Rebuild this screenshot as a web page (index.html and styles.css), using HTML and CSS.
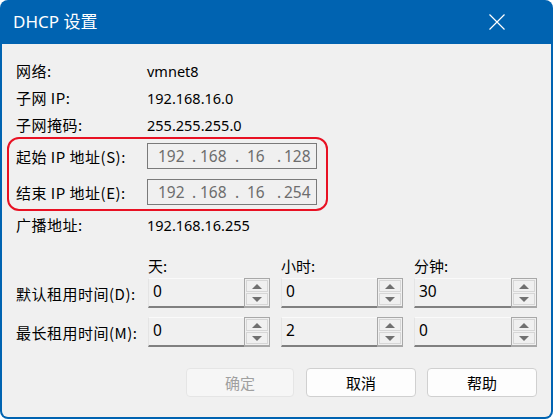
FILE: index.html
```html
<!DOCTYPE html>
<html lang="zh-CN">
<head>
<meta charset="utf-8">
<title>DHCP 设置</title>
<link rel="stylesheet" href="styles.css">
</head>
<body>
<div class="window">
  <div class="titlebar">
    <span class="title">DHCP 设置</span>
    <svg class="close" width="16" height="16" viewBox="0 0 16 16"><path d="M0.5 0.5 L15.5 15.5 M15.5 0.5 L0.5 15.5" stroke="#fff" stroke-width="1.2" fill="none"/></svg>
  </div>
  <div class="content">
    <div class="info">
      <div class="row"><span class="lbl">网络:</span><span class="val">vmnet8</span></div>
      <div class="row"><span class="lbl">子网 IP:</span><span class="val">192.168.16.0</span></div>
      <div class="row"><span class="lbl">子网掩码:</span><span class="val">255.255.255.0</span></div>
    </div>
    <div class="highlight">
      <div class="iprow">
        <span class="lbl">起始 IP 地址(S):</span>
        <div class="ip"><span class="o1">192</span><span class="d1">.</span><span class="o2">168</span><span class="d2">.</span><span class="o3">16</span><span class="d3">.</span><span>128</span></div>
      </div>
      <div class="iprow">
        <span class="lbl">结束 IP 地址(E):</span>
        <div class="ip"><span class="o1">192</span><span class="d1">.</span><span class="o2">168</span><span class="d2">.</span><span class="o3">16</span><span class="d3">.</span><span>254</span></div>
      </div>
    </div>
    <div class="row"><span class="lbl">广播地址:</span><span class="val">192.168.16.255</span></div>
    <div class="lease">
      <div class="lrow head"><span></span><span>天:</span><span>小时:</span><span>分钟:</span></div>
      <div class="lrow">
        <span class="lbl">默认租用时间(D):</span>
        <div class="spin"><div class="field">0</div><div class="btns"><div class="b"><i class="up"></i></div><div class="b"><i class="dn"></i></div></div></div>
        <div class="spin"><div class="field">0</div><div class="btns"><div class="b"><i class="up"></i></div><div class="b"><i class="dn"></i></div></div></div>
        <div class="spin"><div class="field">30</div><div class="btns"><div class="b"><i class="up"></i></div><div class="b"><i class="dn"></i></div></div></div>
      </div>
      <div class="lrow">
        <span class="lbl">最长租用时间(M):</span>
        <div class="spin"><div class="field">0</div><div class="btns"><div class="b"><i class="up"></i></div><div class="b"><i class="dn"></i></div></div></div>
        <div class="spin"><div class="field">2</div><div class="btns"><div class="b"><i class="up"></i></div><div class="b"><i class="dn"></i></div></div></div>
        <div class="spin"><div class="field">0</div><div class="btns"><div class="b"><i class="up"></i></div><div class="b"><i class="dn"></i></div></div></div>
      </div>
    </div>
    <div class="buttons">
      <button class="btn disabled w108">确定</button>
      <button class="btn">取消</button>
      <button class="btn">帮助</button>
    </div>
  </div>
</div>
</body>
</html>
```

FILE: styles.css
```css
* { box-sizing: border-box; }
html, body { margin: 0; padding: 0; background: #ffffff; }
body {
  font-family: "Noto Sans", "Noto Sans CJK SC", sans-serif;
  font-size: 15px;
  color: #000;
}
.window {
  width: 553px;
  height: 419px;
  background: #0063b1;
  border-radius: 8px;
  display: flex;
  flex-direction: column;
  overflow: hidden;
}
.titlebar {
  height: 44px;
  display: flex;
  align-items: center;
  justify-content: space-between;
  padding: 0 48px 0 13px;
  color: #fff;
}
.title { font-size: 17px; line-height: 20px; margin-top: -1px; }
.close { display: block; margin-top: -1px; }
.content {
  flex: 1;
  margin: 0 2px 2px 2px;
  background: #f0f0f0;
  border-radius: 0 0 6px 6px;
  padding: 13px 14px 0 14px;
}
.row {
  height: 27px;
  display: grid;
  grid-template-columns: 131px auto;
  align-items: center;
}
.lbl { font-family: "Noto Sans CJK SC", sans-serif; font-size: 15px; letter-spacing: 0.5px; white-space: nowrap; }
.val { font-size: 14.5px; }
.highlight {
  margin: -1px 0 0 -9px;
  width: 321px;
  border: 2px solid #e81123;
  border-radius: 12px;
  padding: 4px 9px 4px 7px;
  display: flex;
  flex-direction: column;
  gap: 10px;
}
.iprow {
  height: 26px;
  display: grid;
  grid-template-columns: 131px 170px;
  align-items: center;
}
.ip {
  height: 26px;
  border: 1px solid #7a7a7a;
  background: #f0f0f0;
  color: #6d6d6d;
  font-size: 15.5px;
  display: grid;
  grid-template-columns: 34px 8px 35px 12px 30px 7px auto;
  align-items: center;
  padding-left: 10px;
  line-height: 24px;
}
.lease { margin-top: 18px; display: flex; flex-direction: column; gap: 9px; }
.lrow {
  display: grid;
  grid-template-columns: 121px 122px 122px 123px;
  column-gap: 11px;
  height: 30px;
  align-items: center;
}
.lrow.head {
  height: 17px;
  align-items: start;
  font-family: "Noto Sans CJK SC", sans-serif;
  font-size: 15px;
  line-height: 22px;
  margin-bottom: -4px;
}
.lrow.head span { margin-top: -1px; }
.spin { display: flex; height: 30px; }
.field {
  flex: 1;
  border-top: 1px solid #fafafa;
  border-left: 1px solid #e4e4e4;
  border-bottom: 2px solid #808080;
  padding-left: 4px;
  line-height: 24px;
  font-size: 15.5px;
}
.btns {
  width: 26px;
  border: 1px solid #a8a8a8;
  border-bottom-width: 2px;
  display: flex;
  flex-direction: column;
  padding: 1px;
  gap: 1px;
}
.b {
  flex: 1;
  border: 1px solid #d6d6d6;
  display: flex;
  align-items: center;
  justify-content: center;
}
.b i { display: block; width: 0; height: 0; border-left: 5px solid transparent; border-right: 5px solid transparent; }
.b i.up { border-bottom: 5px solid #707070; }
.b i.dn { border-top: 5px solid #707070; }
.buttons {
  margin-top: 21px;
  display: flex;
  justify-content: flex-end;
  gap: 11px;
}
.btn {
  width: 110px;
  height: 29px;
  border: 1px solid #d0d0d0;
  border-radius: 4px;
  background: #fdfdfd;
  font-family: "Noto Sans CJK SC", sans-serif;
  font-size: 15px;
  color: #000;
  padding: 0;
}
.btn.w108 { width: 108px; margin-right: 1px; }
.btn.disabled {
  background: #f6f6f6;
  border-color: #e5e5e5;
  color: #a0a0a0;
}
```
